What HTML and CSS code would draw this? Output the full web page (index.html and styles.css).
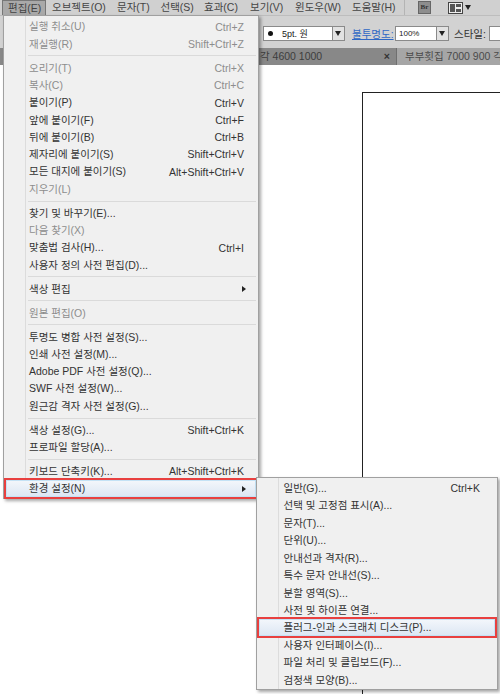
FILE: index.html
```html
<!DOCTYPE html>
<html lang="ko">
<head>
<meta charset="utf-8">
<title>환경 설정</title>
<link rel="stylesheet" href="styles.css">
</head>
<body>
<div class="app">
  <header class="menubar">
    <span class="top top-active">편집(E)</span>
    <span class="top w1">오브젝트(O)</span>
    <span class="top w2">문자(T)</span>
    <span class="top w2">선택(S)</span>
    <span class="top w4">효과(C)</span>
    <span class="top w5">보기(V)</span>
    <span class="top w3">윈도우(W)</span>
    <span class="top w6">도움말(H)</span>
    <span class="vsep"></span>
    <span class="br">Br</span>
    <span class="layout-ic"><svg width="15" height="12" viewBox="0 0 15 12"><rect x="0.5" y="0.5" width="14" height="11" fill="#eee" stroke="#444"/><rect x="2" y="2" width="5" height="8" fill="#555"/><rect x="8" y="2" width="5" height="3" fill="#555"/><rect x="8" y="7" width="5" height="3" fill="#555"/></svg></span>
    <span class="caret"></span>
  </header>
  <div class="toolbar">
    <span class="combo stroke"><span class="dot"></span><span class="combo-text">5pt. 원</span><span class="drop"></span></span>
    <a class="link">불투명도:</a>
    <span class="combo opacity"><span class="combo-text pct">100%</span><span class="drop"></span></span>
    <span class="tool-label">스타일:</span>
    <span class="combo style"></span>
  </div>
  <div class="tabs">
    <span class="tab tab-one">각 4600 1000<b class="close">×</b></span>
    <span class="tab tab-two">부부횟집 7000 900 각</span>
  </div>
  <main class="canvas"><div class="artboard"></div></main>
</div>

<nav class="menu main-menu">
  <div class="row off"><span>실행 취소(U)</span><kbd>Ctrl+Z</kbd></div>
  <div class="row off"><span>재실행(R)</span><kbd>Shift+Ctrl+Z</kbd></div>
  <hr>
  <div class="row off"><span>오리기(T)</span><kbd>Ctrl+X</kbd></div>
  <div class="row off"><span>복사(C)</span><kbd>Ctrl+C</kbd></div>
  <div class="row"><span>붙이기(P)</span><kbd>Ctrl+V</kbd></div>
  <div class="row"><span>앞에 붙이기(F)</span><kbd>Ctrl+F</kbd></div>
  <div class="row"><span>뒤에 붙이기(B)</span><kbd>Ctrl+B</kbd></div>
  <div class="row"><span>제자리에 붙이기(S)</span><kbd>Shift+Ctrl+V</kbd></div>
  <div class="row"><span>모든 대지에 붙이기(S)</span><kbd>Alt+Shift+Ctrl+V</kbd></div>
  <div class="row off"><span>지우기(L)</span></div>
  <hr>
  <div class="row"><span>찾기 및 바꾸기(E)...</span></div>
  <div class="row off"><span>다음 찾기(X)</span></div>
  <div class="row"><span>맞춤법 검사(H)...</span><kbd>Ctrl+I</kbd></div>
  <div class="row"><span>사용자 정의 사전 편집(D)...</span></div>
  <hr>
  <div class="row"><span>색상 편집</span><i class="arrow"></i></div>
  <hr>
  <div class="row off"><span>원본 편집(O)</span></div>
  <hr>
  <div class="row"><span>투명도 병합 사전 설정(S)...</span></div>
  <div class="row"><span>인쇄 사전 설정(M)...</span></div>
  <div class="row"><span>Adobe PDF 사전 설정(Q)...</span></div>
  <div class="row"><span>SWF 사전 설정(W)...</span></div>
  <div class="row"><span>원근감 격자 사전 설정(G)...</span></div>
  <hr>
  <div class="row"><span>색상 설정(G)...</span><kbd>Shift+Ctrl+K</kbd></div>
  <div class="row"><span>프로파일 할당(A)...</span></div>
  <hr>
  <div class="row"><span>키보드 단축키(K)...</span><kbd>Alt+Shift+Ctrl+K</kbd></div>
  <div class="row hot"><span>환경 설정(N)</span><i class="arrow"></i></div>
</nav>

<nav class="menu sub-menu">
  <div class="row"><span>일반(G)...</span><kbd>Ctrl+K</kbd></div>
  <div class="row"><span>선택 및 고정점 표시(A)...</span></div>
  <div class="row"><span>문자(T)...</span></div>
  <div class="row"><span>단위(U)...</span></div>
  <div class="row"><span>안내선과 격자(R)...</span></div>
  <div class="row"><span>특수 문자 안내선(S)...</span></div>
  <div class="row"><span>분할 영역(S)...</span></div>
  <div class="row"><span>사전 및 하이픈 연결...</span></div>
  <div class="row hot"><span>플러그-인과 스크래치 디스크(P)...</span></div>
  <div class="row"><span>사용자 인터페이스(I)...</span></div>
  <div class="row"><span>파일 처리 및 클립보드(F)...</span></div>
  <div class="row"><span>검정색 모양(B)...</span></div>
</nav>
</body>
</html>
```
FILE: styles.css
```css
* { box-sizing: border-box; }
html, body { margin: 0; height: 100%; }
body {
  position: relative;
  width: 500px;
  height: 694px;
  overflow: hidden;
  font-family: "Liberation Sans", "Noto Sans CJK KR", sans-serif;
  font-size: 10.5px;
  color: #333;
  background: #fff;
}
.app { display: flex; flex-direction: column; height: 694px; }
.menubar {
  display: flex;
  align-items: center;
  height: 15px;
  background: #d0d0d0;
  color: #444;
  padding-left: 2px;
  white-space: nowrap;
}
.top { display: block; flex: none; line-height: 15px; }
.top-active {
  width: 44px;
  padding-left: 5px;
  background: #a9a9a9;
  border: 1px solid #777;
  border-bottom: 0;
  line-height: 14px;
  height: 15px;
}
.w1 { width: 71px; padding-left: 6px; }
.w2 { width: 43.5px; }
.w4 { width: 46px; }
.w5 { width: 45px; }
.w3 { width: 57px; }
.w6 { width: 52px; }
.vsep { flex: none; width: 1px; height: 15px; background: #b4b4b4; margin-right: 13px; }
.br {
  flex: none;
  width: 13px; height: 13px; margin-right: 17px;
  background: #8d8d8d; border: 1px solid #666; color: #333;
  font: bold 7px/11px "Liberation Serif", serif; text-align: center;
}
.layout-ic { display: flex; flex: none; }
.caret { flex: none; width: 0; height: 0; border: 3.5px solid transparent; border-top: 5px solid #222; border-bottom: 0; margin-left: 2px; }
.toolbar {
  display: flex;
  align-items: center;
  height: 33px;
  padding: 3px 0 0 263px;
  background: #d2d2d2;
  border-top: 1px solid #bdbdbd;
  white-space: nowrap;
  overflow: hidden;
}
.combo {
  display: flex;
  flex: none;
  align-items: center;
  height: 15px;
  background: #fff;
  border: 1px solid #8a8a8a;
  font-size: 9px;
  color: #222;
}
.stroke { width: 82px; }
.dot { width: 5px; height: 5px; border-radius: 50%; background: #111; margin: 0 9px 0 4px; }
.combo-text { flex: 1; }
.pct { padding-left: 3px; font-size: 8px; }
.drop {
  position: relative;
  flex: none;
  width: 12px;
  height: 13px;
  background: #e2e2e2;
  border-left: 1px solid #8a8a8a;
}
.drop::after {
  content: "";
  position: absolute;
  left: 2px; top: 4px;
  border: 3.5px solid transparent;
  border-top: 5px solid #222;
  border-bottom: 0;
}
.link { flex: none; color: #2f68c4; text-decoration: underline; font-size: 10.5px; margin-left: 7px; width: 43px; }
.opacity { width: 54px; }
.tool-label { flex: none; margin-left: 5px; width: 35px; font-size: 10.5px; }
.style { width: 40px; border-right: 0; }
.tabs {
  display: flex;
  height: 17px;
  background: #8a8a8a;
  color: #3d3d3d;
  white-space: nowrap;
  overflow: hidden;
  font-size: 10.5px;
}
.tab { display: flex; align-items: center; line-height: 17px; }
.tab-one { flex: none; width: 397px; padding-left: 260px; background: #888; border-right: 1px solid #6f6f6f; }
.close { margin-left: auto; margin-right: 6px; font-weight: bold; color: #333; }
.tab-two { flex: 1; padding-left: 8px; background: #a6a6a6; color: #4a4a4a; }
.canvas { flex: 1; background: #fff; padding: 27px 0 0 362px; overflow: hidden; }
.artboard { width: 160px; height: 640px; border: 1px solid #222; }

.menu {
  position: absolute;
  background: #f0f0f0;
  border: 1px solid #a0a0a0;
  box-shadow: 2px 2px 3px rgba(0,0,0,.35);
  background-image: linear-gradient(#dcdcdc, #dcdcdc);
  background-size: 1px 100%;
  background-repeat: no-repeat;
  background-position: 21px 0;
}
.main-menu { left: 3px; top: 15px; width: 256px; height: 484px; padding: 2px 2px; }
.sub-menu { left: 256px; top: 477px; width: 242px; height: 213px; padding: 1.5px 2px; }
.row {
  display: flex;
  align-items: center;
  justify-content: space-between;
  height: 17.45px;
  padding: 0 12px 0 23px;
  white-space: nowrap;
}
.main-menu .row { height: 17.3px; }
.sub-menu .row { padding-right: 15px; padding-left: 24.5px; }
.row span { line-height: 1; }
kbd { font-family: "Liberation Sans", sans-serif; font-size: 10.5px; }
.off { color: #8d8d8d; }
hr { margin: 2.85px 0 2.85px 22px; height: 1px; border: 0; background: #dadada; }
.arrow { width: 0; height: 0; border: 3.5px solid transparent; border-left: 4px solid #222; border-right: 0; margin-right: -2px; }
.hot {
  outline: 2px solid #e8403f;
  background: linear-gradient(#f4f7fb, #dbe6f3);
  box-shadow: inset 0 0 0 1px #c4e2f5;
}
```
